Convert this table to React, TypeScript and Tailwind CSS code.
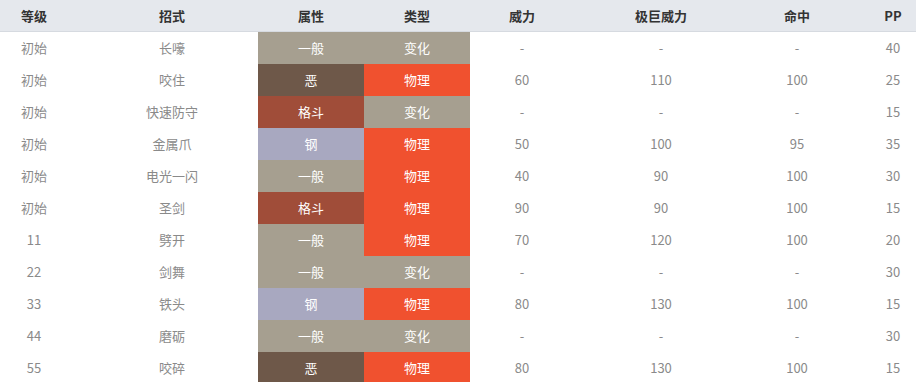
import React from "react";

type Row = [string, string, string, string, string, string, string, string];

const rows: Row[] = [
  ["初始", "长嚎", "一般", "变化", "-", "-", "-", "40"],
  ["初始", "咬住", "恶", "物理", "60", "110", "100", "25"],
  ["初始", "快速防守", "格斗", "变化", "-", "-", "-", "15"],
  ["初始", "金属爪", "钢", "物理", "50", "100", "95", "35"],
  ["初始", "电光一闪", "一般", "物理", "40", "90", "100", "30"],
  ["初始", "圣剑", "格斗", "物理", "90", "90", "100", "15"],
  ["11", "劈开", "一般", "物理", "70", "120", "100", "20"],
  ["22", "剑舞", "一般", "变化", "-", "-", "-", "30"],
  ["33", "铁头", "钢", "物理", "80", "130", "100", "15"],
  ["44", "磨砺", "一般", "变化", "-", "-", "-", "30"],
  ["55", "咬碎", "恶", "物理", "80", "130", "100", "15"],
];

const typeBg: Record<string, string> = {
  一般: "bg-[#a69f90]",
  恶: "bg-[#6e5849]",
  格斗: "bg-[#a04d39]",
  钢: "bg-[#a8a8c0]",
  物理: "bg-[#f0512f]",
  变化: "bg-[#a69f90]",
};

const font = { fontFamily: '"Noto Sans CJK SC", "Noto Sans", sans-serif' };

const grid = "grid grid-cols-[68px_190px_106px_106px_104px_174px_98px_70px]";

export default function App() {
  return (
    <div className="w-[916px] h-[382px] overflow-hidden bg-white text-[13px]" style={font}>
      <div className={`${grid} h-[32px] bg-[#e5e8ed] border-b border-[#d6dae0] text-[#333] font-bold items-center`}>
        <div className="text-center">等级</div>
        <div className="text-center pl-[18px]">招式</div>
        <div className="text-center">属性</div>
        <div className="text-center">类型</div>
        <div className="text-center">威力</div>
        <div className="text-center">极巨威力</div>
        <div className="text-center">命中</div>
        <div className="text-center pl-[24px]">PP</div>
      </div>
      {rows.map((r, i) => (
        <div key={i} className={`${grid} h-[32px] text-[#8a8a8a]`}>
          <div className="flex items-center justify-center">{r[0]}</div>
          <div className="flex items-center justify-center pl-[18px]">{r[1]}</div>
          <div className={`flex items-center justify-center text-white ${typeBg[r[2]]}`}>{r[2]}</div>
          <div className={`flex items-center justify-center text-white ${typeBg[r[3]]}`}>{r[3]}</div>
          <div className="flex items-center justify-center">{r[4]}</div>
          <div className="flex items-center justify-center">{r[5]}</div>
          <div className="flex items-center justify-center">{r[6]}</div>
          <div className="flex items-center justify-center pl-[24px]">{r[7]}</div>
        </div>
      ))}
    </div>
  );
}
